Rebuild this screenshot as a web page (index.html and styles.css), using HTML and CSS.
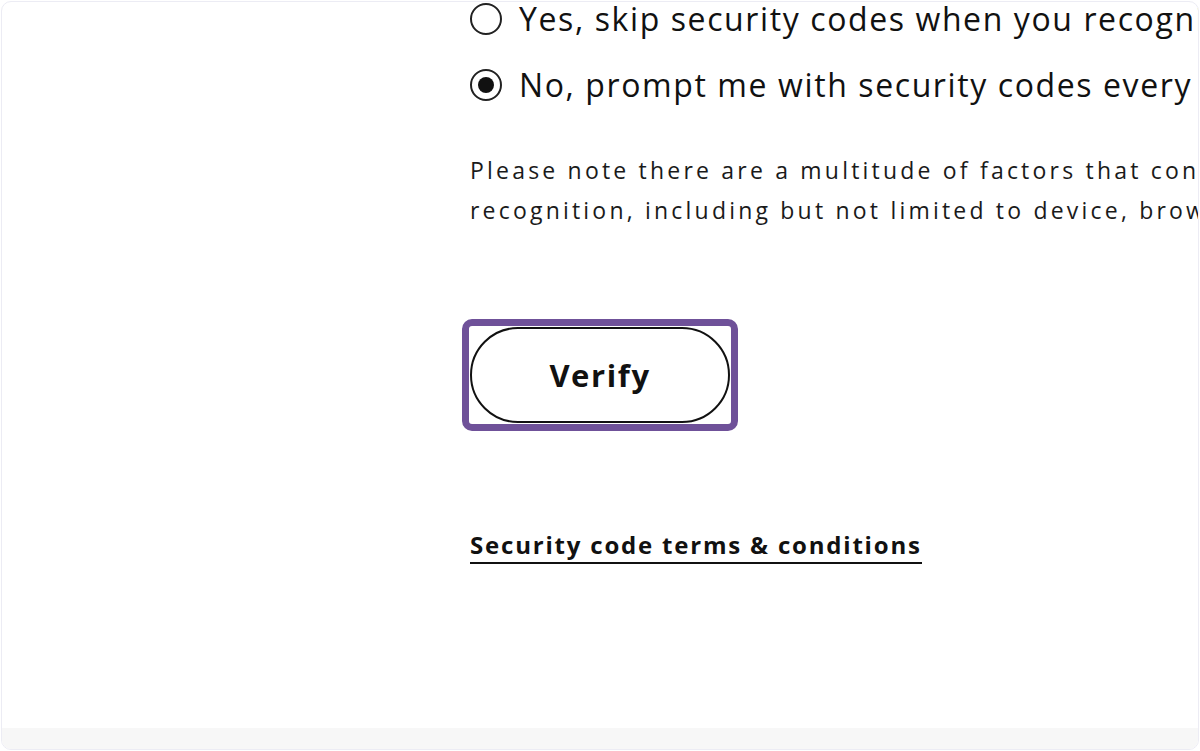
FILE: index.html
```html
<!DOCTYPE html>
<html lang="en">
<head>
<meta charset="utf-8">
<title>Security codes</title>
<link rel="stylesheet" href="styles.css">
</head>
<body>
<div class="frame">
  <main class="content">
    <label class="option">
      <span class="radio"></span>
      <span class="option-text">Yes, skip security codes when you recognize this device</span>
    </label>
    <label class="option option-second">
      <span class="radio radio-checked"></span>
      <span class="option-text">No, prompt me with security codes every time I sign in</span>
    </label>
    <p class="note">Please note there are a multitude of factors that contribute to device<br>recognition, including but not limited to device, browser and location.</p>
    <div class="focus-ring">
      <button class="verify" type="button">Verify</button>
    </div>
    <a class="terms" href="#">Security code terms &amp; conditions</a>
  </main>
  <footer class="strip"></footer>
</div>
</body>
</html>
```

FILE: styles.css
```css
html, body {
  margin: 0;
  padding: 0;
  background: #ffffff;
}
body {
  font-family: "Open Sans", "Noto Sans", sans-serif;
  color: #111111;
}
.frame {
  box-sizing: border-box;
  margin: 1px;
  width: 1198px;
  height: 749px;
  border: 1px solid #ececf4;
  border-radius: 10px;
  overflow: hidden;
  display: flex;
  flex-direction: column;
  background: #ffffff;
}
.content {
  flex: 1;
  padding-left: 468px;
  padding-top: 0;
  display: flex;
  flex-direction: column;
  align-items: flex-start;
  white-space: nowrap;
}
.option {
  display: flex;
  align-items: center;
  height: 34px;
  gap: 17px;
  font-size: 32px;
  letter-spacing: 1.6px;
  line-height: 34px;
  color: #111;
}
.option-second {
  margin-top: 32px;
}
.radio {
  box-sizing: border-box;
  width: 32px;
  height: 32px;
  border: 2px solid #222;
  border-radius: 50%;
  display: flex;
  align-items: center;
  justify-content: center;
  flex: none;
}
.radio-checked::after {
  content: "";
  width: 16px;
  height: 16px;
  border-radius: 50%;
  background: #111;
}
.note {
  margin: 48px 0 0;
  font-size: 23px;
  letter-spacing: 3.2px;
  line-height: 40px;
  color: #1a1a1a;
}
.focus-ring {
  margin-top: 89px;
  margin-left: -8px;
  border: 7px solid #6f5199;
  border-radius: 10px;
  padding: 1px;
  display: flex;
}
.verify {
  box-sizing: border-box;
  width: 260px;
  height: 96px;
  border: 2px solid #111;
  border-radius: 48px;
  background: #fff;
  font-family: inherit;
  font-size: 31px;
  letter-spacing: 1.6px;
  font-weight: 700;
  color: #111;
  cursor: pointer;
}
.terms {
  margin-top: 99px;
  display: inline-block;
  font-size: 24px;
  letter-spacing: 1.8px;
  line-height: 30px;
  font-weight: 700;
  color: #111;
  text-decoration: none;
  padding-bottom: 2px;
  border-bottom: 2px solid #111;
}
.strip {
  height: 21px;
  background: #f7f7f7;
  flex: none;
}
```
